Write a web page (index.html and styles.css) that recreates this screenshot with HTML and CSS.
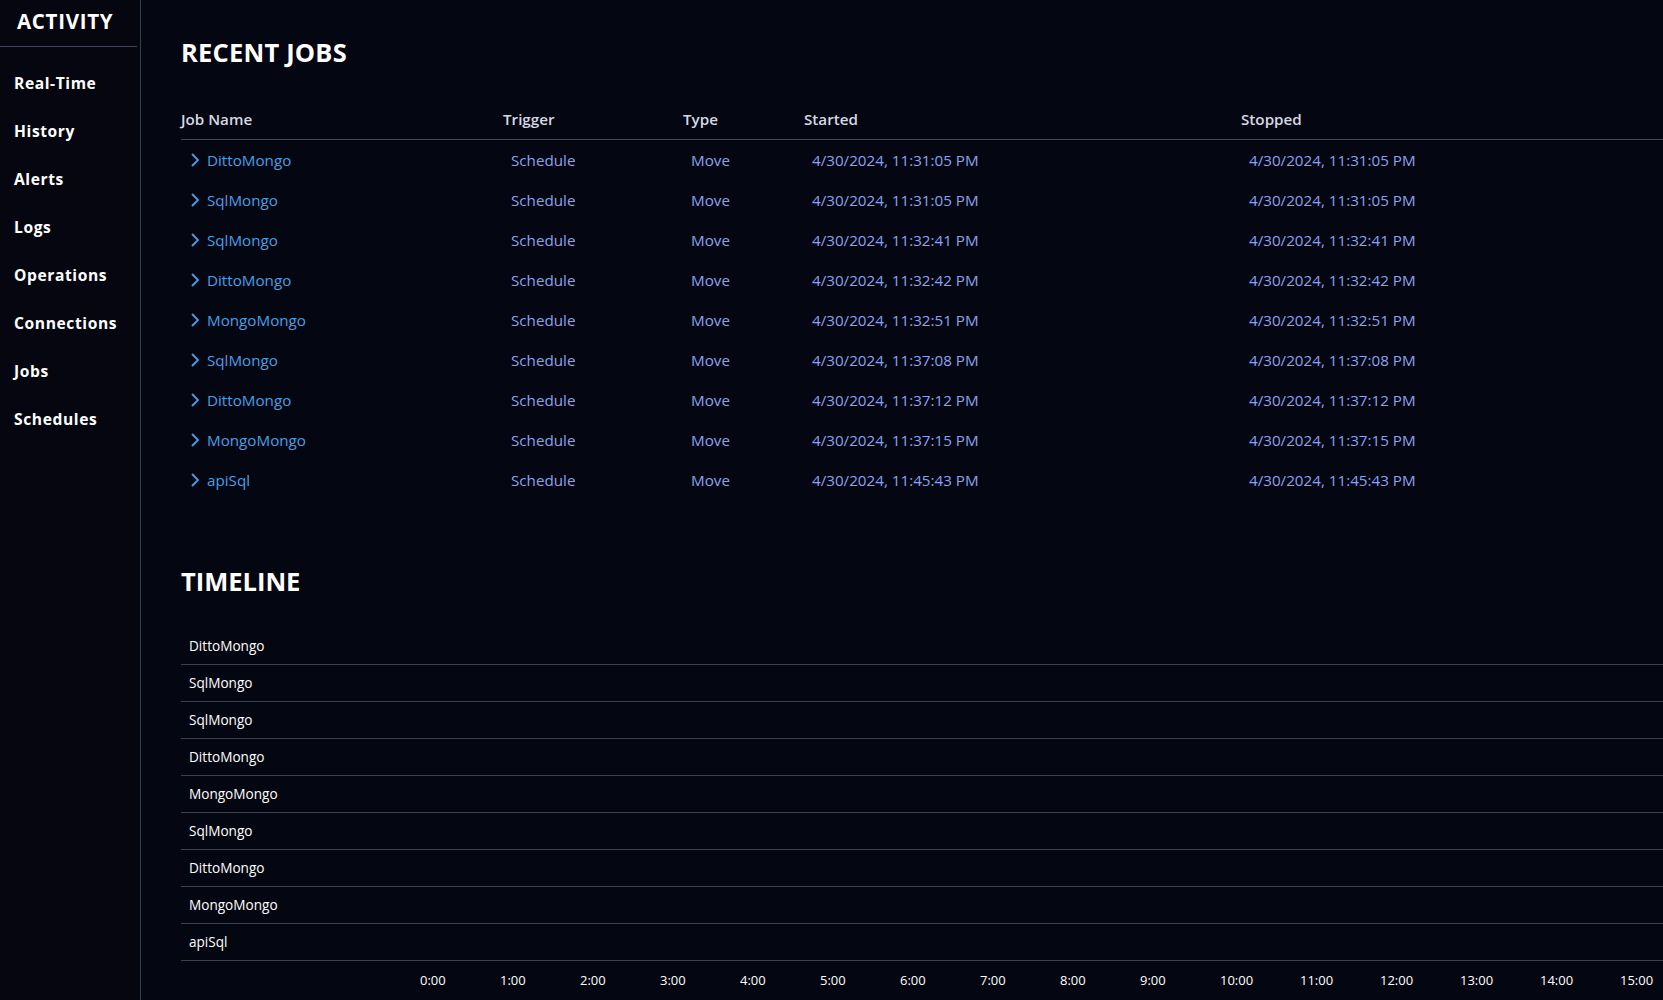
FILE: index.html
```html
<!DOCTYPE html>
<html lang="en">
<head>
<meta charset="utf-8">
<title>Activity</title>
<link rel="stylesheet" href="styles.css">
</head>
<body>
<div class="app">
  <aside class="sidebar">
    <div class="brand">ACTIVITY</div>
    <nav class="nav">
      <a class="nav-item">Real-Time</a>
      <a class="nav-item">History</a>
      <a class="nav-item">Alerts</a>
      <a class="nav-item">Logs</a>
      <a class="nav-item">Operations</a>
      <a class="nav-item">Connections</a>
      <a class="nav-item">Jobs</a>
      <a class="nav-item">Schedules</a>
    </nav>
  </aside>
  <main class="main">
    <section class="section">
      <h2 class="title">RECENT JOBS</h2>
      <table class="jobs">
        <colgroup>
          <col class="c-name"><col class="c-trigger"><col class="c-type"><col class="c-started"><col>
        </colgroup>
        <thead>
          <tr><th>Job Name</th><th>Trigger</th><th>Type</th><th>Started</th><th>Stopped</th></tr>
        </thead>
        <tbody>
          <tr><td><span class="job"><svg class="chev" viewBox="0 0 10 14"><polyline points="2,1 8,7 2,13"/></svg>DittoMongo</span></td><td>Schedule</td><td>Move</td><td>4/30/2024, 11:31:05 PM</td><td>4/30/2024, 11:31:05 PM</td></tr>
          <tr><td><span class="job"><svg class="chev" viewBox="0 0 10 14"><polyline points="2,1 8,7 2,13"/></svg>SqlMongo</span></td><td>Schedule</td><td>Move</td><td>4/30/2024, 11:31:05 PM</td><td>4/30/2024, 11:31:05 PM</td></tr>
          <tr><td><span class="job"><svg class="chev" viewBox="0 0 10 14"><polyline points="2,1 8,7 2,13"/></svg>SqlMongo</span></td><td>Schedule</td><td>Move</td><td>4/30/2024, 11:32:41 PM</td><td>4/30/2024, 11:32:41 PM</td></tr>
          <tr><td><span class="job"><svg class="chev" viewBox="0 0 10 14"><polyline points="2,1 8,7 2,13"/></svg>DittoMongo</span></td><td>Schedule</td><td>Move</td><td>4/30/2024, 11:32:42 PM</td><td>4/30/2024, 11:32:42 PM</td></tr>
          <tr><td><span class="job"><svg class="chev" viewBox="0 0 10 14"><polyline points="2,1 8,7 2,13"/></svg>MongoMongo</span></td><td>Schedule</td><td>Move</td><td>4/30/2024, 11:32:51 PM</td><td>4/30/2024, 11:32:51 PM</td></tr>
          <tr><td><span class="job"><svg class="chev" viewBox="0 0 10 14"><polyline points="2,1 8,7 2,13"/></svg>SqlMongo</span></td><td>Schedule</td><td>Move</td><td>4/30/2024, 11:37:08 PM</td><td>4/30/2024, 11:37:08 PM</td></tr>
          <tr><td><span class="job"><svg class="chev" viewBox="0 0 10 14"><polyline points="2,1 8,7 2,13"/></svg>DittoMongo</span></td><td>Schedule</td><td>Move</td><td>4/30/2024, 11:37:12 PM</td><td>4/30/2024, 11:37:12 PM</td></tr>
          <tr><td><span class="job"><svg class="chev" viewBox="0 0 10 14"><polyline points="2,1 8,7 2,13"/></svg>MongoMongo</span></td><td>Schedule</td><td>Move</td><td>4/30/2024, 11:37:15 PM</td><td>4/30/2024, 11:37:15 PM</td></tr>
          <tr><td><span class="job"><svg class="chev" viewBox="0 0 10 14"><polyline points="2,1 8,7 2,13"/></svg>apiSql</span></td><td>Schedule</td><td>Move</td><td>4/30/2024, 11:45:43 PM</td><td>4/30/2024, 11:45:43 PM</td></tr>
        </tbody>
      </table>
    </section>
    <section class="section timeline-section">
      <h2 class="title">TIMELINE</h2>
      <div class="timeline">
        <div class="tl-row">DittoMongo</div>
        <div class="tl-row">SqlMongo</div>
        <div class="tl-row">SqlMongo</div>
        <div class="tl-row">DittoMongo</div>
        <div class="tl-row">MongoMongo</div>
        <div class="tl-row">SqlMongo</div>
        <div class="tl-row">DittoMongo</div>
        <div class="tl-row">MongoMongo</div>
        <div class="tl-row">apiSql</div>
      </div>
      <div class="axis">
        <span class="tick">0:00</span>
        <span class="tick">1:00</span>
        <span class="tick">2:00</span>
        <span class="tick">3:00</span>
        <span class="tick">4:00</span>
        <span class="tick">5:00</span>
        <span class="tick">6:00</span>
        <span class="tick">7:00</span>
        <span class="tick">8:00</span>
        <span class="tick">9:00</span>
        <span class="tick">10:00</span>
        <span class="tick">11:00</span>
        <span class="tick">12:00</span>
        <span class="tick">13:00</span>
        <span class="tick">14:00</span>
        <span class="tick">15:00</span>
      </div>
    </section>
  </main>
</div>
</body>
</html>
```
FILE: styles.css
```css
html, body {
  margin: 0;
  padding: 0;
  background: #040612;
  color: #ffffff;
  font-family: "Open Sans", "Noto Sans", sans-serif;
  overflow: hidden;
}

.app {
  display: flex;
  min-height: 100vh;
}

.sidebar {
  width: 140px;
  flex: none;
  background: #05060f;
  border-right: 1px solid #3a3e4d;
}

.brand {
  height: 46px;
  margin-right: 3px;
  border-bottom: 1px solid #3f4352;
  font-size: 20.5px;
  font-weight: 700;
  letter-spacing: 0.7px;
  line-height: 42px;
  padding-left: 17px;
}

.nav {
  display: flex;
  flex-direction: column;
  padding-top: 12px;
}

.nav-item {
  height: 48px;
  line-height: 48px;
  padding-left: 14px;
  font-size: 15.6px;
  font-weight: 700;
  letter-spacing: 0.6px;
  color: #ffffff;
}

.main {
  flex: 1;
  min-width: 0;
  padding-left: 40px;
}

.title {
  margin: 36px 0 34px;
  font-size: 25.5px;
  line-height: 32px;
  font-weight: 700;
  letter-spacing: 0.2px;
  color: #ffffff;
}

.jobs {
  width: 100%;
  table-layout: fixed;
  border-collapse: collapse;
  font-size: 15.2px;
}

.c-name { width: 322px; }
.c-trigger { width: 180px; }
.c-type { width: 121px; }
.c-started { width: 437px; }

.jobs th {
  text-align: left;
  font-weight: 600;
  color: #d6d9e4;
  padding: 7px 0 10px;
  line-height: 20px;
  border-bottom: 1px solid #434756;
}

.jobs td {
  height: 40px;
  padding: 0 8px;
  line-height: 20px;
  color: #8aa3ee;
  white-space: nowrap;
  vertical-align: middle;
}

.job {
  display: inline-flex;
  align-items: center;
  gap: 7px;
  color: #47a0e6;
  padding-left: 1px;
}

.chev {
  width: 10px;
  height: 14px;
  fill: none;
  stroke: #47a0e6;
  stroke-width: 1.8;
}

.timeline-section .title {
  margin-top: 65px;
  margin-bottom: 31px;
  letter-spacing: 0;
}

.tl-row {
  height: 36px;
  line-height: 36px;
  border-bottom: 1px solid #3e4250;
  padding-left: 8px;
  font-size: 13.6px;
  color: #ffffff;
}

.axis {
  display: flex;
  padding-left: 239px;
  height: 38px;
  align-items: center;
  font-size: 13px;
  color: #ffffff;
}

.tick {
  flex: none;
  width: 80px;
  text-align: left;
}
```
